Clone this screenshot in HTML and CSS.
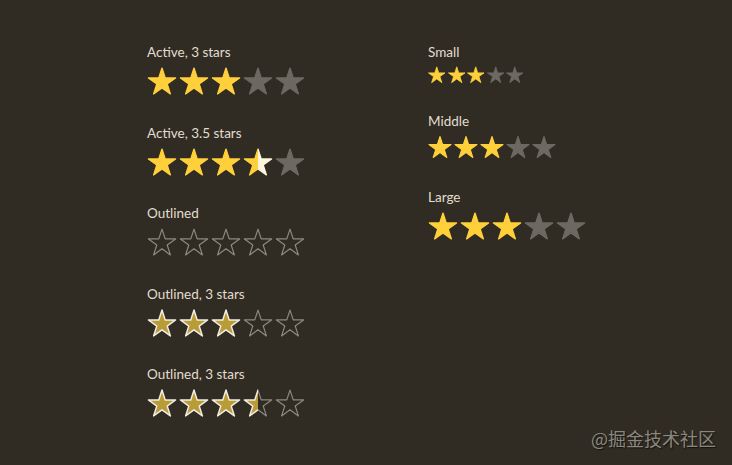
FILE: index.html
```html
<!DOCTYPE html>
<html>
<head>
<meta charset="utf-8">
<link rel="stylesheet" href="styles.css">
</head>
<body>
<svg class="defs" width="0" height="0" aria-hidden="true">
  <defs>
    <polygon id="star" points="12,2.3 14.42,9.7 22.2,9.7 15.9,14.28 18.3,21.7 12,17.13 5.7,21.7 8.1,14.28 1.8,9.7 9.58,9.7"/>
    <clipPath id="left-half"><rect x="0" y="0" width="12" height="24"/></clipPath>
    <clipPath id="right-half"><rect x="12" y="0" width="12" height="24"/></clipPath>
  </defs>
</svg>
<div class="page">
  <div class="col col-left">
    <div class="group">
      <div class="label">Active, 3 stars</div>
      <div class="stars lg">
        <svg viewBox="0 0 24 24"><use href="#star" class="on"/></svg>
        <svg viewBox="0 0 24 24"><use href="#star" class="on"/></svg>
        <svg viewBox="0 0 24 24"><use href="#star" class="on"/></svg>
        <svg viewBox="0 0 24 24"><use href="#star" class="off"/></svg>
        <svg viewBox="0 0 24 24"><use href="#star" class="off"/></svg>
      </div>
    </div>
    <div class="group">
      <div class="label">Active, 3.5 stars</div>
      <div class="stars lg">
        <svg viewBox="0 0 24 24"><use href="#star" class="on"/></svg>
        <svg viewBox="0 0 24 24"><use href="#star" class="on"/></svg>
        <svg viewBox="0 0 24 24"><use href="#star" class="on"/></svg>
        <svg viewBox="0 0 24 24"><use href="#star" class="cream" clip-path="url(#right-half)"/><use href="#star" class="on" clip-path="url(#left-half)"/></svg>
        <svg viewBox="0 0 24 24"><use href="#star" class="off"/></svg>
      </div>
    </div>
    <div class="group">
      <div class="label">Outlined</div>
      <div class="stars lg">
        <svg viewBox="0 0 24 24"><use href="#star" class="line"/></svg>
        <svg viewBox="0 0 24 24"><use href="#star" class="line"/></svg>
        <svg viewBox="0 0 24 24"><use href="#star" class="line"/></svg>
        <svg viewBox="0 0 24 24"><use href="#star" class="line"/></svg>
        <svg viewBox="0 0 24 24"><use href="#star" class="line"/></svg>
      </div>
    </div>
    <div class="group">
      <div class="label">Outlined, 3 stars</div>
      <div class="stars lg">
        <svg viewBox="0 0 24 24"><use href="#star" class="gold"/></svg>
        <svg viewBox="0 0 24 24"><use href="#star" class="gold"/></svg>
        <svg viewBox="0 0 24 24"><use href="#star" class="gold"/></svg>
        <svg viewBox="0 0 24 24"><use href="#star" class="line"/></svg>
        <svg viewBox="0 0 24 24"><use href="#star" class="line"/></svg>
      </div>
    </div>
    <div class="group">
      <div class="label">Outlined, 3 stars</div>
      <div class="stars lg">
        <svg viewBox="0 0 24 24"><use href="#star" class="gold"/></svg>
        <svg viewBox="0 0 24 24"><use href="#star" class="gold"/></svg>
        <svg viewBox="0 0 24 24"><use href="#star" class="gold"/></svg>
        <svg viewBox="0 0 24 24"><use href="#star" class="line" clip-path="url(#right-half)"/><use href="#star" class="gold" clip-path="url(#left-half)"/></svg>
        <svg viewBox="0 0 24 24"><use href="#star" class="line"/></svg>
      </div>
    </div>
  </div>
  <div class="col col-right">
    <div class="group">
      <div class="label">Small</div>
      <div class="stars sm">
        <svg viewBox="0 0 24 24"><use href="#star" class="on"/></svg>
        <svg viewBox="0 0 24 24"><use href="#star" class="on"/></svg>
        <svg viewBox="0 0 24 24"><use href="#star" class="on"/></svg>
        <svg viewBox="0 0 24 24"><use href="#star" class="off"/></svg>
        <svg viewBox="0 0 24 24"><use href="#star" class="off"/></svg>
      </div>
    </div>
    <div class="group">
      <div class="label">Middle</div>
      <div class="stars md">
        <svg viewBox="0 0 24 24"><use href="#star" class="on"/></svg>
        <svg viewBox="0 0 24 24"><use href="#star" class="on"/></svg>
        <svg viewBox="0 0 24 24"><use href="#star" class="on"/></svg>
        <svg viewBox="0 0 24 24"><use href="#star" class="off"/></svg>
        <svg viewBox="0 0 24 24"><use href="#star" class="off"/></svg>
      </div>
    </div>
    <div class="group">
      <div class="label">Large</div>
      <div class="stars lg">
        <svg viewBox="0 0 24 24"><use href="#star" class="on"/></svg>
        <svg viewBox="0 0 24 24"><use href="#star" class="on"/></svg>
        <svg viewBox="0 0 24 24"><use href="#star" class="on"/></svg>
        <svg viewBox="0 0 24 24"><use href="#star" class="off"/></svg>
        <svg viewBox="0 0 24 24"><use href="#star" class="off"/></svg>
      </div>
    </div>
  </div>
</div>
<div class="watermark">@掘金技术社区</div>
</body>
</html>
```
FILE: styles.css
```css
html, body {
  margin: 0;
  padding: 0;
}
body {
  width: 732px;
  height: 465px;
  background: #302c23;
  font-family: "Lato", "Noto Sans", sans-serif;
  color: #e2ddd0;
  overflow: hidden;
  position: relative;
}
.defs {
  position: absolute;
  width: 0;
  height: 0;
}
.page {
  display: flex;
  padding: 42px 0 0 146px;
}
.col {
  display: flex;
  flex-direction: column;
}
.col-left {
  width: 281px;
  gap: 25.5px;
}
.col-right {
  gap: 26.5px;
}
.group {
  display: flex;
  flex-direction: column;
  gap: 3px;
}
.label {
  font-size: 13.5px;
  line-height: 21px;
  height: 20px;
  padding-left: 1px;
}
.stars {
  display: flex;
}
.stars svg {
  display: block;
  overflow: visible;
}
.lg svg { width: 32px; height: 32px; }
.md svg { width: 26px; height: 26px; }
.sm svg { width: 19.5px; height: 19.5px; }

.on {
  fill: #ffd03a;
  stroke: #ffd03a;
  stroke-width: 1;
  stroke-linejoin: round;
}
.off {
  fill: #6c6962;
  stroke: #6c6962;
  stroke-width: 1;
  stroke-linejoin: round;
}
.cream {
  fill: #fdf6dc;
  stroke: #fdf6dc;
  stroke-width: 1;
  stroke-linejoin: round;
}
.line {
  fill: none;
  stroke: #8d8980;
  stroke-width: 0.9;
  stroke-linejoin: round;
}
.gold {
  fill: #b99b38;
  stroke: #f1ede2;
  stroke-width: 1.1;
  stroke-linejoin: round;
}
.watermark {
  position: absolute;
  right: 16px;
  bottom: 16px;
  font-family: "Noto Sans CJK SC", sans-serif;
  font-size: 18px;
  line-height: 22px;
  color: #8b877e;
  text-shadow: 1px 1px 1px rgba(0,0,0,0.6);
}
```
